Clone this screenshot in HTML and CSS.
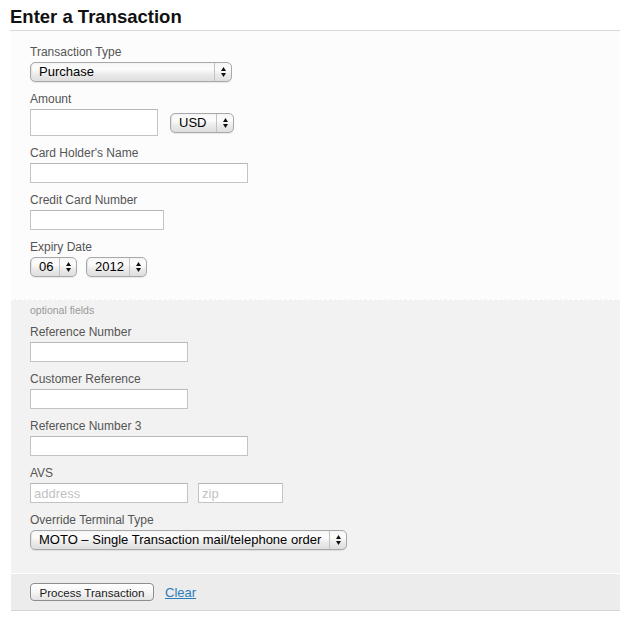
FILE: index.html
```html
<!DOCTYPE html>
<html>
<head>
<meta charset="utf-8">
<title>Enter a Transaction</title>
<link rel="stylesheet" href="styles.css">
</head>
<body>
<div class="page">
  <h1 class="title">Enter a Transaction</h1>

  <div class="panel panel-main">
    <div class="field">
      <div class="lbl">Transaction Type</div>
      <div class="sel w-type"><span class="sel-text">Purchase</span><span class="sel-arr"><svg width="5" height="10" viewBox="0 0 5 10"><path d="M2.5 0L5 4H0Z M0 6H5L2.5 10Z" fill="#111"/></svg></span></div>
    </div>
    <div class="field">
      <div class="lbl">Amount</div>
      <div class="row row-amount">
        <div class="inp w-amount"></div>
        <div class="sel w-cur"><span class="sel-text">USD</span><span class="sel-arr"><svg width="5" height="10" viewBox="0 0 5 10"><path d="M2.5 0L5 4H0Z M0 6H5L2.5 10Z" fill="#111"/></svg></span></div>
      </div>
    </div>
    <div class="field">
      <div class="lbl">Card Holder's Name</div>
      <div class="inp w-wide"></div>
    </div>
    <div class="field">
      <div class="lbl">Credit Card Number</div>
      <div class="inp w-card"></div>
    </div>
    <div class="field last">
      <div class="lbl">Expiry Date</div>
      <div class="row row-exp">
        <div class="sel w-month"><span class="sel-text">06</span><span class="sel-arr"><svg width="5" height="10" viewBox="0 0 5 10"><path d="M2.5 0L5 4H0Z M0 6H5L2.5 10Z" fill="#111"/></svg></span></div>
        <div class="sel w-year"><span class="sel-text">2012</span><span class="sel-arr"><svg width="5" height="10" viewBox="0 0 5 10"><path d="M2.5 0L5 4H0Z M0 6H5L2.5 10Z" fill="#111"/></svg></span></div>
      </div>
    </div>
  </div>

  <div class="panel panel-opt">
    <div class="note">optional fields</div>
    <div class="field">
      <div class="lbl">Reference Number</div>
      <div class="inp w-ref"></div>
    </div>
    <div class="field">
      <div class="lbl">Customer Reference</div>
      <div class="inp w-ref"></div>
    </div>
    <div class="field">
      <div class="lbl">Reference Number 3</div>
      <div class="inp w-wide"></div>
    </div>
    <div class="field">
      <div class="lbl">AVS</div>
      <div class="row row-avs">
        <div class="inp w-ref"><span class="ph">address</span></div>
        <div class="inp w-zip"><span class="ph">zip</span></div>
      </div>
    </div>
    <div class="field last">
      <div class="lbl">Override Terminal Type</div>
      <div class="sel w-term"><span class="sel-text">MOTO – Single Transaction mail/telephone order</span><span class="sel-arr"><svg width="5" height="10" viewBox="0 0 5 10"><path d="M2.5 0L5 4H0Z M0 6H5L2.5 10Z" fill="#111"/></svg></span></div>
    </div>
  </div>

  <div class="panel panel-foot">
    <span class="btn">Process Transaction</span>
    <a class="link" href="#">Clear</a>
  </div>
</div>
</body>
</html>
```

FILE: styles.css
```css
html, body {
  margin: 0;
  padding: 0;
  background: #ffffff;
}

body {
  font-family: "Liberation Sans", Arial, sans-serif;
  color: #222;
}

.page {
  padding-left: 10px;
  width: 640px;
}

.title {
  margin: 0;
  height: 31px;
  box-sizing: border-box;
  padding-top: 5px;
  line-height: 24px;
  font-size: 18.5px;
  font-weight: bold;
  color: #111;
  border-bottom: 1px solid #d9d9d9;
}

.panel {
  margin-left: 1px;
  padding-left: 19px;
}

.panel-main {
  background: #fcfcfc;
  padding-top: 13px;
  padding-bottom: 22px;
}

.panel-opt {
  background: #f2f2f2;
  border-top: 1px dashed #ffffff;
  padding-top: 4px;
  padding-bottom: 23px;
}

.panel-foot {
  background: #ececec;
  border-top: 1px solid #ffffff;
  border-bottom: 1px solid #d6d6d6;
  height: 36px;
  display: flex;
  align-items: center;
}

.note {
  font-size: 10.5px;
  line-height: 12px;
  color: #999;
  margin-bottom: 8px;
}

.field {
  display: flex;
  flex-direction: column;
  align-items: flex-start;
  margin-bottom: 9px;
}

.field.last {
  margin-bottom: 0;
}

.lbl {
  font-size: 12px;
  line-height: 16px;
  color: #555;
  margin-bottom: 2px;
}

.row {
  display: flex;
  align-items: center;
}

.row-amount { gap: 12px; }
.row-exp { gap: 9px; }
.row-avs { gap: 10px; }

.inp {
  height: 20px;
  box-sizing: border-box;
  background: #fff;
  border: 1px solid #c4c4c4;
  border-top-color: #b8b8b8;
  display: flex;
  align-items: center;
  padding-left: 3px;
}

.ph {
  font-size: 13px;
  color: #c2c2c2;
}

.w-amount { width: 128px; height: 27px; }
.w-wide { width: 218px; }
.w-card { width: 134px; }
.w-ref { width: 158px; }
.w-zip { width: 85px; }

.sel {
  height: 20px;
  box-sizing: border-box;
  display: flex;
  align-items: center;
  border: 1px solid #a8a8a8;
  border-radius: 5px;
  background: linear-gradient(to bottom, #f7f7f7 0%, #fcfcfc 35%, #eaeaea 65%, #dedede 100%);
  box-shadow: inset 1px 0 1px #e2e2e2, 0 1px 1px rgba(0,0,0,0.08);
  font-size: 13px;
  color: #000;
}

.sel-text {
  flex: 1;
  padding-left: 8px;
  white-space: nowrap;
  line-height: 18px;
}

.sel-arr {
  width: 16px;
  height: 18px;
  border-left: 1px solid #c2c2c2;
  display: flex;
  align-items: center;
  justify-content: center;
}

.sel-arr svg {
  display: block;
}

.w-type { width: 202px; }
.w-cur { width: 64px; }
.w-month { width: 47px; }
.w-year { width: 61px; }
.w-term { width: 317px; }

.btn {
  display: inline-flex;
  align-items: center;
  justify-content: center;
  width: 124px;
  height: 18px;
  box-sizing: border-box;
  border: 1px solid #8e8e8e;
  border-radius: 4px;
  background: linear-gradient(to bottom, #ffffff 0%, #f6f6f6 50%, #e3e3e3 100%);
  font-size: 11.6px;
  color: #1a1a1a;
}

.link {
  margin-left: 11px;
  font-size: 13px;
  color: #2b7bb9;
  text-decoration: underline;
}
```
